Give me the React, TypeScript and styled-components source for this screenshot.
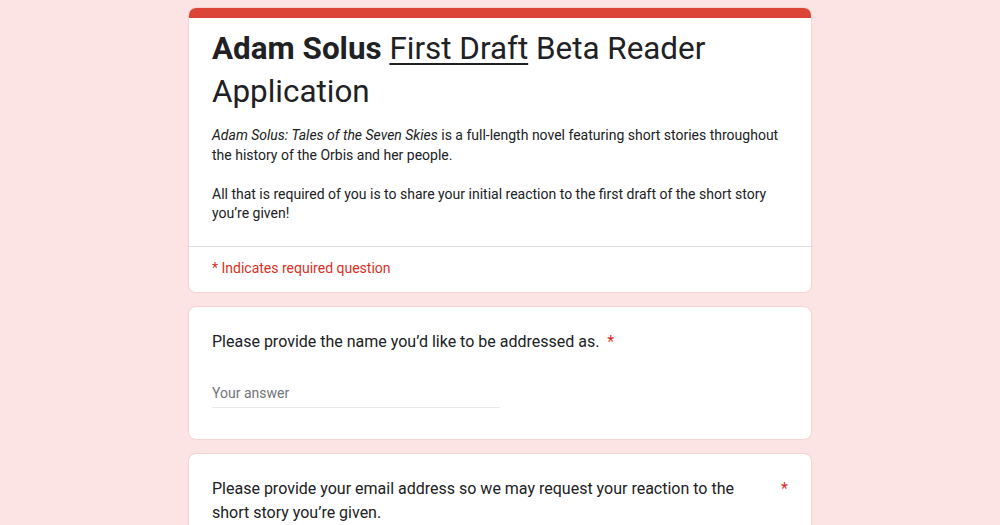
import * as React from 'react'
import styled, { createGlobalStyle } from 'styled-components'

const GlobalStyle = createGlobalStyle`
  body {
    margin: 0;
    background: #fbe4e3;
    font-family: Roboto, "Liberation Sans", sans-serif;
    color: #202124;
  }
`

const Page = styled.div`
  display: flex;
  flex-direction: column;
  align-items: center;
  gap: 13px;
  padding-top: 7px;
  min-height: 525px;
  box-sizing: border-box;
`

const Card = styled.div`
  width: 624px;
  box-sizing: border-box;
  background: #fff;
  border: 1px solid #f6d3d1;
  border-radius: 8px;
  overflow: hidden;
`

const TopBar = styled.div`
  height: 10px;
  background: #db4437;
`

const HeaderBody = styled.div`
  padding: 9px 23px 22px;
`

const Title = styled.h1`
  margin: 0;
  font-family: Roboto, "Liberation Sans", sans-serif;
  font-size: 31.4px;
  font-weight: 400;
  line-height: 43px;
  color: #202124;

  b {
    font-weight: 700;
  }
  u {
    text-decoration-thickness: 2px;
    text-underline-offset: 4px;
  }
`

const Description = styled.p`
  margin: 13px 0 0;
  font-size: 14px;
  line-height: 19.5px;
  color: #202124;
`

const Divider = styled.div`
  height: 1px;
  background: #dadce0;
`

const RequiredNote = styled.div`
  padding: 11px 23px 14px;
  font-size: 14px;
  line-height: 20px;
  color: #d93025;
`

const QuestionBody = styled.div`
  padding: 23px 23px 31px;
`

const QuestionTitle = styled.div`
  display: flex;
  align-items: flex-start;
  font-size: 16px;
  line-height: 24px;
  color: #202124;
`

const QuestionText = styled.span`
  flex: 0 1 auto;
`

const Asterisk = styled.span`
  flex: none;
  color: #d93025;
  padding-left: 6px;
  margin-left: 24px;
`

const InlineAsterisk = styled.span`
  color: #d93025;
  padding-left: 4px;
`

const AnswerInput = styled.input`
  display: block;
  width: 288px;
  margin-top: 25px;
  padding: 4px 0 4px;
  border: none;
  border-bottom: 1px solid #e8eaed;
  outline: none;
  font-family: Roboto, "Liberation Sans", sans-serif;
  font-size: 14px;
  line-height: 20px;
  color: #202124;
  background: transparent;

  &::placeholder {
    color: #70757a;
  }
`

export default function App() {
  return (
    <>
      <GlobalStyle />
      <Page>
        <Card>
          <TopBar />
          <HeaderBody>
            <Title>
              <b>Adam Solus</b> <u>First Draft</u> Beta Reader Application
            </Title>
            <Description>
              <i>Adam Solus: Tales of the Seven Skies</i> is a full-length novel
              featuring short stories throughout the history of the Orbis and her
              people.
              <br />
              <br />
              All that is required of you is to share your initial reaction to
              the first draft of the short story you’re given!
            </Description>
          </HeaderBody>
          <Divider />
          <RequiredNote>* Indicates required question</RequiredNote>
        </Card>

        <Card>
          <QuestionBody>
            <QuestionTitle>
              <span>
                Please provide the name you’d like to be addressed as.
                <InlineAsterisk> *</InlineAsterisk>
              </span>
            </QuestionTitle>
            <AnswerInput placeholder="Your answer" />
          </QuestionBody>
        </Card>

        <Card>
          <QuestionBody>
            <QuestionTitle>
              <QuestionText>
                Please provide your email address so we may request your
                reaction to the short story you’re given.
              </QuestionText>
              <Asterisk>*</Asterisk>
            </QuestionTitle>
            <AnswerInput placeholder="Your answer" />
          </QuestionBody>
        </Card>
      </Page>
    </>
  )
}
